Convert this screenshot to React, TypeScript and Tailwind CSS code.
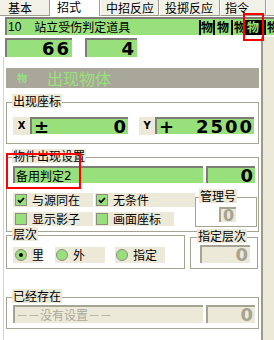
import React from 'react';

function Legend({ children, className }: { children: React.ReactNode; className: string }) {
    return (
        <span className={`absolute top-[-9px] bg-[#ece9d8] px-[1px] text-[12px] leading-[14px] ${className}`}>
            {children}
        </span>
    );
}

function Check({ on }: { on?: boolean }) {
    return (
        <span className="flex h-[12px] w-[12px] shrink-0 items-center justify-center border border-[#8d8c80] bg-[#98e07c]">
            {on && (
                <svg width="8" height="7" viewBox="0 0 8 7">
                    <path d="M1 3.2 L3 5.3 L7 1" stroke="#000" strokeWidth="1.8" fill="none" />
                </svg>
            )}
        </span>
    );
}

function Radio({ on }: { on?: boolean }) {
    return (
        <span className="flex h-[12px] w-[12px] shrink-0 items-center justify-center rounded-full border border-[#8d8c80] bg-[#98e07c]">
            {on && <span className="h-[4px] w-[4px] rounded-full bg-black" />}
        </span>
    );
}

export default function App() {
    const num = "font-['DejaVu_Sans',sans-serif] font-bold text-[18px] tracking-[2px]";

    return (
        <div className="relative h-[340px] w-[274px] overflow-hidden bg-white text-[12px] leading-none text-black font-['Noto_Sans_CJK_SC',sans-serif]">
            {/* Tabs */}
            <div className="flex h-[16px] bg-[#ece9d8] leading-[14px]">
                <div className="flex h-[16px] w-[50px] items-center border-b border-r border-[#9d9c8d] bg-[#f2f1e8] pl-[8px] pt-[1px]">基本</div>
                <div className="flex h-[16px] w-[50px] items-start border-r border-[#9d9c8d] bg-white pl-[7px]">招式</div>
                <div className="flex h-[16px] w-[59px] items-center border-b border-r border-l border-b-[#9d9c8d] border-r-[#9d9c8d] border-l-white bg-[#f2f1e8] pl-[5px] pt-[1px]">中招反应</div>
                <div className="flex h-[16px] w-[61px] items-center border-b border-r border-l border-b-[#9d9c8d] border-r-[#9d9c8d] border-l-white bg-[#f2f1e8] pl-[5px] pt-[1px]">投掷反应</div>
                <div className="flex h-[16px] w-[46px] items-center border-b border-r border-l border-b-[#9d9c8d] border-r-[#9d9c8d] border-l-white bg-[#f2f1e8] pl-[4px] pt-[1px]">指令</div>
                <div className="h-[16px] flex-1 border-b border-l border-b-[#9d9c8d] border-l-white bg-[#f2f1e8]" />
            </div>

            {/* Title row */}
            <div className="mt-[1px] flex h-[18px] pl-[5px]">
                <div className="flex h-[18px] w-[194px] items-center border-l-2 border-t-2 border-[#7d7d75] bg-[#98e07c] pl-[1px]">
                    <span className="font-['Liberation_Sans',sans-serif] text-[12px]">10</span>
                    <span className="ml-[13px]">站立受伤判定道具</span>
                </div>
                <div className="flex h-[18px] flex-1 items-center overflow-hidden border-t-2 border-[#7d7d75] bg-[#98e07c] font-bold">
                    <span className="flex h-[15px] w-[14px] shrink-0 items-center justify-center border-l-2 border-black">物</span>
                    <span className="flex h-[15px] w-[18px] shrink-0 items-center justify-center border-l-2 border-black">物</span>
                    <span className="flex h-[15px] w-[13px] shrink-0 items-center justify-start overflow-hidden border-l-2 border-black pl-[1px]">物</span>
                    <span className="flex h-[15px] w-[18px] shrink-0 items-center justify-center bg-black text-[#98e07c]">物</span>
                    <span className="ml-[2px] flex h-[15px] w-[12px] shrink-0 items-center justify-start overflow-hidden border-l-2 border-black pl-[1px]">物</span>
                </div>
            </div>

            {/* Body */}
            <div className="mt-[2px] flex">
                <div className="flex h-[303px] w-[261px] flex-col">
                    {/* numbers */}
                    <div className="mt-[1px] flex h-[19px]">
                        <div className={`ml-[5px] flex w-[67px] items-center justify-end border-l-2 border-t-2 border-[#7d7d75] bg-[#98e07c] pr-[1px] ${num}`}>66</div>
                        <div className={`ml-[13px] flex w-[52px] items-center justify-end border-l-2 border-t-2 border-[#7d7d75] bg-[#98e07c] pr-[1px] ${num}`}>4</div>
                    </div>

                    <div className="ml-[3px] flex flex-1 flex-col border-l border-[#d6d4c6]">
                        {/* header bar */}
                        <div className="ml-[2px] mt-[11px] flex h-[20px] w-[253px] items-center bg-[#a8a799] text-[#98e07c]">
                            <span className="ml-[11px] text-[10px] font-bold">物</span>
                            <span className="ml-[20px] text-[16px]">出现物体</span>
                        </div>

                        {/* 出现座标 */}
                        <div className="relative ml-[2px] mt-[14px] h-[42px] w-[253px] border border-[#a5a493]">
                            <Legend className="left-[5px]">出现座标</Legend>
                            <div className="flex pl-[6px] pt-[14px]">
                                <span className="flex h-[18px] w-[17px] items-center justify-center bg-[#ece9d8] font-['DejaVu_Sans',sans-serif] text-[10px] font-bold">X</span>
                                <div className={`flex h-[17px] w-[98px] items-center justify-between border-l-2 border-t-2 border-[#7d7d75] bg-[#98e07c] pl-[2px] pr-0 ${num}`}>
                                    <span>±</span>
                                    <span>0</span>
                                </div>
                                <span className="ml-[11px] flex h-[18px] w-[16px] items-center justify-center bg-[#ece9d8] font-['DejaVu_Sans',sans-serif] text-[10px] font-bold">Y</span>
                                <div className={`flex h-[17px] w-[99px] items-center justify-between border-l-2 border-t-2 border-[#7d7d75] bg-[#98e07c] pl-[2px] pr-0 ${num}`}>
                                    <span>+</span>
                                    <span>2500</span>
                                </div>
                            </div>
                        </div>

                        {/* 物件出现设置 */}
                        <div className="relative ml-[2px] mt-[13px] h-[75px] w-[253px] border border-[#a5a493]">
                            <Legend className="left-[5px]">物件出现设置</Legend>
                            <div className="flex gap-[3px] pl-[6px] pt-[8px]">
                                <div className="flex h-[17px] w-[190px] items-center border-l-2 border-t-2 border-[#7d7d75] bg-[#98e07c] pl-[1px] text-[12px]">
                                    备用判定<span className="font-['DejaVu_Sans',sans-serif]">2</span>
                                </div>
                                <div className={`flex h-[17px] w-[49px] items-center justify-end border-l-2 border-t-2 border-[#7d7d75] bg-[#98e07c] ${num}`}>0</div>
                            </div>
                            <div className="mt-[10px] flex pl-[6px]">
                                <div className="flex w-[182px] flex-col gap-[5px]">
                                    <div className="flex h-[14px]">
                                        <label className="flex w-[80px] items-center gap-[5px] bg-[#ece9d8] pl-[2px]">
                                            <Check on />
                                            与源同在
                                        </label>
                                        <label className="ml-[2px] flex w-[100px] items-center gap-[5px] bg-[#ece9d8] pl-[1px]">
                                            <Check on />
                                            无条件
                                        </label>
                                    </div>
                                    <div className="flex h-[14px]">
                                        <label className="flex w-[80px] items-center gap-[5px] bg-[#ece9d8] pl-[2px]">
                                            <Check />
                                            显示影子
                                        </label>
                                        <label className="ml-[2px] flex w-[79px] items-center gap-[5px] bg-[#ece9d8] pl-[1px]">
                                            <Check />
                                            画面座标
                                        </label>
                                    </div>
                                </div>
                                <div className="relative mt-[4px] h-[30px] w-[62px] border border-[#a5a493]">
                                    <Legend className="left-[3px]">管理号</Legend>
                                    <div className="ml-[23px] mt-[9px] flex h-[15px] w-[17px] items-center justify-center border-l-2 border-t-2 border-[#a5a493] bg-[#ece9d8] font-['DejaVu_Sans',sans-serif] text-[16px] font-bold text-[#a5a493]">0</div>
                                </div>
                            </div>
                        </div>

                        {/* 层次 / 指定层次 */}
                        <div className="ml-[2px] mt-[3px] flex items-start">
                            <div className="relative h-[34px] w-[179px] border border-[#a5a493]">
                                <Legend className="left-[5px]">层次</Legend>
                                <div className="flex h-[16px] pl-[6px] pt-[11px]">
                                    <label className="flex h-[16px] w-[29px] items-center gap-[5px] bg-[#ece9d8] pl-[2px]">
                                        <Radio on />
                                        里
                                    </label>
                                    <label className="ml-[13px] flex h-[16px] w-[50px] items-center gap-[5px] bg-[#ece9d8] pl-[1px]">
                                        <Radio />
                                        外
                                    </label>
                                    <label className="ml-[10px] flex h-[16px] w-[50px] items-center gap-[5px] bg-[#ece9d8] pl-[1px]">
                                        <Radio />
                                        指定
                                    </label>
                                </div>
                            </div>
                            <div className="relative ml-[5px] mt-[2px] h-[32px] w-[68px] border border-[#a5a493]">
                                <Legend className="left-[6px]">指定层次</Legend>
                                <div className={`ml-[9px] mt-[7px] flex h-[18px] w-[50px] items-center justify-end border-l-2 border-t-2 border-[#a5a493] bg-[#ece9d8] text-[#a5a493] ${num}`}>0</div>
                            </div>
                        </div>

                        {/* 已经存在 */}
                        <div className="relative ml-[2px] mt-[28px] h-[32px] w-[253px] border border-[#a5a493]">
                            <Legend className="left-[5px]">已经存在</Legend>
                            <div className="flex gap-[3px] pl-[6px] pt-[7px]">
                                <div className="flex h-[18px] w-[190px] items-center border-l-2 border-t-2 border-[#a5a493] bg-[#ece9d8] pl-[1px] text-[#aaa99b]">
                                    －－没有设置－－
                                </div>
                                <div className={`flex h-[18px] w-[49px] items-center justify-end border-l-2 border-t-2 border-[#a5a493] bg-[#ece9d8] text-[#a5a493] ${num}`}>0</div>
                            </div>
                        </div>
                    </div>
                </div>
                <div className="h-[303px] flex-1 border-l-2 border-[#9c9b8b] bg-[#ece9d8]" />
            </div>

            {/* annotations */}
            <div className="absolute left-[243px] top-[13px] h-[28px] w-[21px] border-2 border-[#ff0000]" />
            <div className="absolute left-[6px] top-[153px] h-[36px] w-[75px] border-2 border-[#ff0000]" />
        </div>
    );
}
